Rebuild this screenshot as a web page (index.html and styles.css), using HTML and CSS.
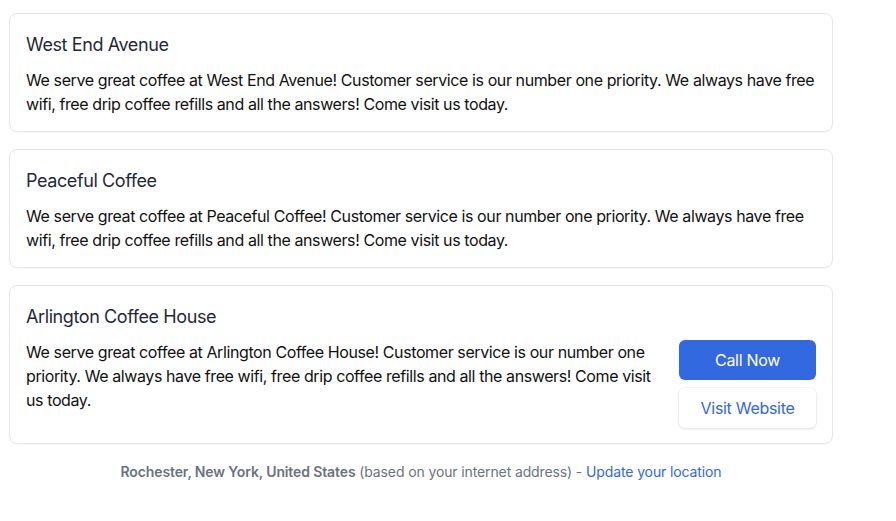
FILE: index.html
```html
<!DOCTYPE html>
<html lang="en">
<head>
<meta charset="utf-8">
<title>Coffee Shops</title>
<link rel="stylesheet" href="styles.css">
</head>
<body>
<div class="page">
  <div class="card">
    <h2 class="title">West End Avenue</h2>
    <p class="desc">We serve great coffee at West End Avenue! Customer service is our number one priority. We always have free wifi, free drip coffee refills and all the answers! Come visit us today.</p>
  </div>
  <div class="card">
    <h2 class="title">Peaceful Coffee</h2>
    <p class="desc">We serve great coffee at Peaceful Coffee! Customer service is our number one priority. We always have free wifi, free drip coffee refills and all the answers! Come visit us today.</p>
  </div>
  <div class="card">
    <h2 class="title">Arlington Coffee House</h2>
    <div class="row">
      <p class="desc">We serve great coffee at Arlington Coffee House! Customer service is our number one priority. We always have free wifi, free drip coffee refills and all the answers! Come visit us today.</p>
      <div class="actions">
        <a class="btn btn-primary" href="#">Call Now</a>
        <a class="btn btn-secondary" href="#">Visit Website</a>
      </div>
    </div>
  </div>
  <p class="footer"><strong>Rochester, New York, United States</strong> (based on your internet address) - <a href="#">Update your location</a></p>
</div>
</body>
</html>
```
FILE: styles.css
```css
* { box-sizing: border-box; }
html, body { margin: 0; padding: 0; background: #fff; }
body {
  font-family: Inter, "Noto Sans", sans-serif;
  color: #111827;
  -webkit-font-smoothing: antialiased;
}
.page {
  width: 824px;
  margin-left: 9px;
  padding-top: 13px;
  display: flex;
  flex-direction: column;
  gap: 17px;
}
.card {
  border: 1px solid #e5e7eb;
  border-radius: 8px;
  padding: 16px 16px 15px;
  background: #fff;
  box-shadow: 0 1px 2px rgba(0,0,0,0.03);
}
.title {
  margin: 0;
  padding: 1px 0 0;
  height: 38px;
  font-size: 18px;
  line-height: 28px;
  font-weight: 400;
  letter-spacing: -0.4px;
  color: #1f2937;
}
.desc {
  margin: 0;
  font-size: 16px;
  line-height: 24px;
  letter-spacing: -0.4px;
  color: #111;
}
.row {
  display: flex;
  gap: 24px;
  align-items: flex-start;
}
.row .desc { flex: 1; }
.actions {
  width: 137px;
  display: flex;
  flex-direction: column;
  gap: 8px;
  flex-shrink: 0;
}
.btn {
  display: flex;
  align-items: center;
  justify-content: center;
  height: 40px;
  border-radius: 6px;
  font-size: 16px;
  font-weight: 400;
  letter-spacing: -0.3px;
  text-decoration: none;
}
.btn-primary {
  background: #3268e0;
  color: #fff;
}
.btn-secondary {
  background: #fff;
  color: #3268e0;
  box-shadow: 0 1px 3px rgba(0,0,0,0.10), 0 0 0 1px rgba(0,0,0,0.03);
}
.footer {
  margin: 1px 0 0;
  text-align: center;
  font-size: 14px;
  line-height: 20px;
  letter-spacing: -0.12px;
  color: #6b7280;
}
.footer strong { font-weight: 600; }
.footer a { color: #3268e0; text-decoration: none; }
```
